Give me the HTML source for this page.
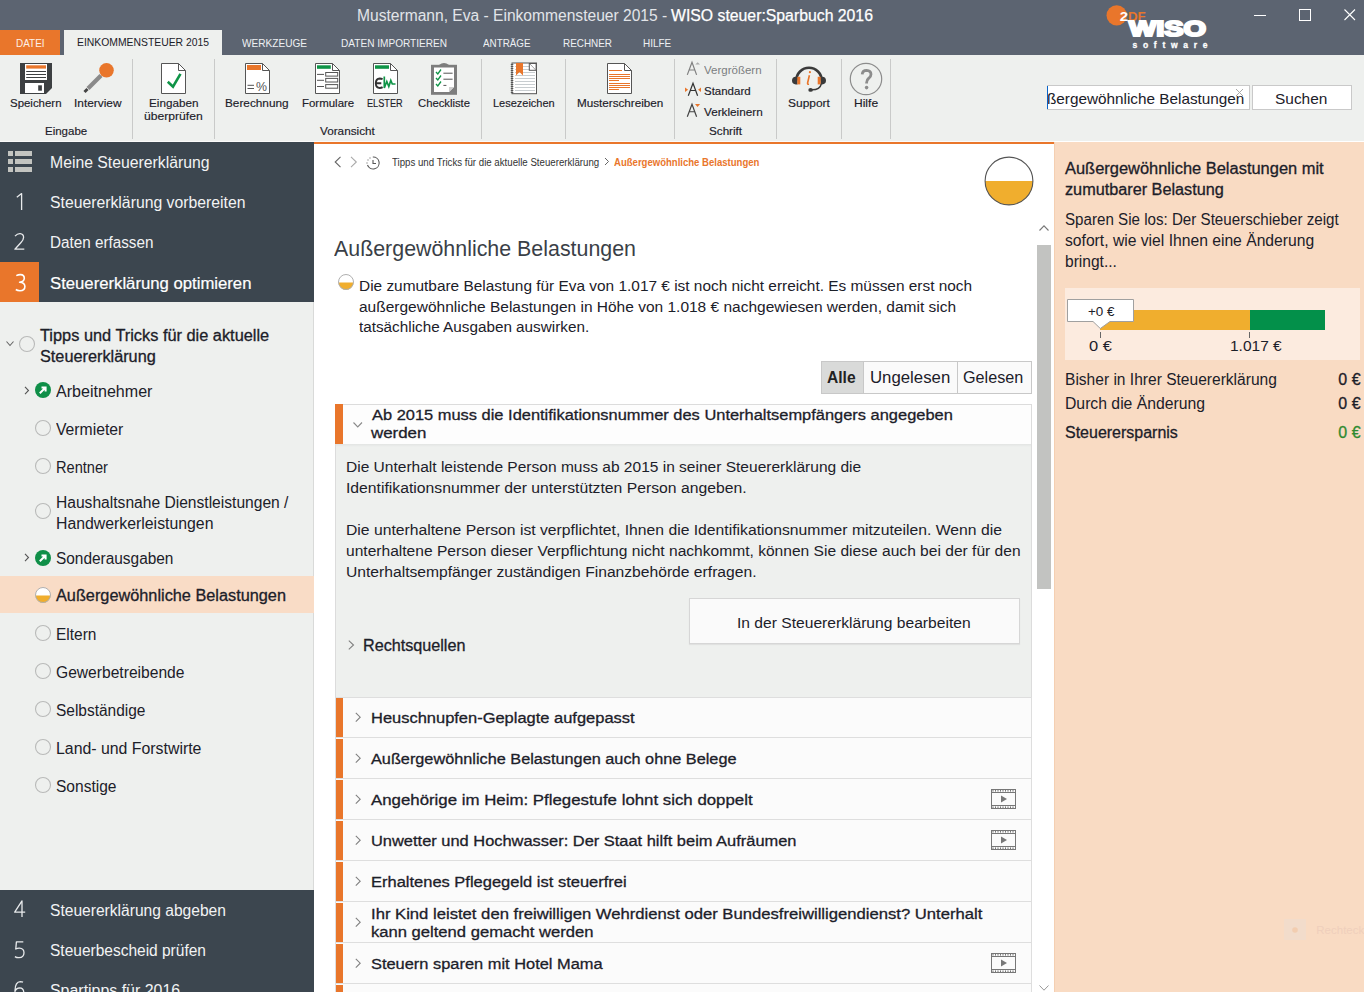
<!DOCTYPE html>
<html><head><meta charset="utf-8">
<style>
*{margin:0;padding:0;box-sizing:border-box}
html,body{width:1364px;height:992px;overflow:hidden;background:#fff;font-family:"Liberation Sans",sans-serif;color:#2a2e35;position:relative}
.a{position:absolute}
.t{white-space:nowrap;line-height:1;transform-origin:0 0}
svg{overflow:visible}
</style></head><body>
<div class="a" style="left:0px;top:0px;width:1364px;height:55px;background:#5c6471;"></div>
<div class="a t" style="left:357.06px;top:8px;font-size:16px;color:#e2e5e9;font-weight:normal;font-family:'Liberation Sans',sans-serif;transform:scaleX(0.9745);">Mustermann, Eva - Einkommensteuer 2015 -</div>
<div class="a t" style="left:670.55px;top:8px;font-size:16px;color:#ffffff;font-weight:normal;font-family:'Liberation Sans',sans-serif;transform:scaleX(0.9872);-webkit-text-stroke:0.25px #fff;">WISO steuer:Sparbuch 2016</div>
<div class="a" style="left:0px;top:30px;width:60px;height:25px;background:#e9762b;"></div>
<div class="a" style="left:64px;top:30px;width:158px;height:25px;background:#eef0ee;"></div>
<div class="a t" style="left:15.80px;top:38px;font-size:11.5px;color:#fdf0e6;font-weight:normal;font-family:'Liberation Sans',sans-serif;transform:scaleX(0.8644);">DATEI</div>
<div class="a t" style="left:76.78px;top:37px;font-size:11.5px;color:#1c2029;font-weight:normal;font-family:'Liberation Sans',sans-serif;transform:scaleX(0.9022);">EINKOMMENSTEUER 2015</div>
<div class="a t" style="left:242.39px;top:38px;font-size:11.5px;color:#eef0f3;font-weight:normal;font-family:'Liberation Sans',sans-serif;transform:scaleX(0.8775);">WERKZEUGE</div>
<div class="a t" style="left:341.40px;top:38px;font-size:11.5px;color:#eef0f3;font-weight:normal;font-family:'Liberation Sans',sans-serif;transform:scaleX(0.8765);">DATEN IMPORTIEREN</div>
<div class="a t" style="left:482.71px;top:38px;font-size:11.5px;color:#eef0f3;font-weight:normal;font-family:'Liberation Sans',sans-serif;transform:scaleX(0.8551);">ANTRÄGE</div>
<div class="a t" style="left:563.21px;top:38px;font-size:11.5px;color:#eef0f3;font-weight:normal;font-family:'Liberation Sans',sans-serif;transform:scaleX(0.8623);">RECHNER</div>
<div class="a t" style="left:642.90px;top:38px;font-size:11.5px;color:#eef0f3;font-weight:normal;font-family:'Liberation Sans',sans-serif;transform:scaleX(0.8663);">HILFE</div>
<div class="a" style="left:1254px;top:15px;width:12px;height:1px;background:#fff;"></div>
<div class="a" style="left:1299px;top:9px;width:12px;height:12px;background:transparent;border:1px solid #fff"></div>
<svg class="a" style="left:1344px;top:9px;" width="12" height="12" viewBox="0 0 12 12"><path d="M0.5 0.5L11 11M11 0.5L0.5 11" stroke="#fff" stroke-width="1.1"/></svg>
<svg class="a" style="left:1100px;top:0px;" width="120" height="55" viewBox="0 0 120 55"><circle cx="16.7" cy="15.4" r="10.2" fill="#e9762b"/><text x="19.8" y="20.8" font-family="Liberation Sans" font-weight="bold" font-size="13" fill="#fff" textLength="8.3" lengthAdjust="spacingAndGlyphs">2</text><text x="28" y="20.8" font-family="Liberation Sans" font-weight="bold" font-size="13" fill="#e9762b" textLength="17.7" lengthAdjust="spacingAndGlyphs">DF</text><text x="29" y="36" font-family="Liberation Sans" font-weight="bold" font-size="22" fill="#fff" stroke="#fff" stroke-width="2.2" textLength="77" lengthAdjust="spacingAndGlyphs">WISO</text><text x="32.5" y="48.4" font-family="Liberation Sans" font-weight="bold" font-size="8.5" fill="#fff" stroke="#fff" stroke-width="0.3" textLength="75" lengthAdjust="spacing">software</text></svg>
<div class="a" style="left:0px;top:55px;width:1364px;height:86px;background:#eef0ee;"></div>
<div class="a" style="left:0px;top:141px;width:1054px;height:1px;background:#fafafa;"></div>
<div class="a" style="left:132px;top:59px;width:1px;height:80px;background:#c9cac9;"></div>
<div class="a" style="left:214px;top:59px;width:1px;height:80px;background:#c9cac9;"></div>
<div class="a" style="left:481px;top:59px;width:1px;height:80px;background:#c9cac9;"></div>
<div class="a" style="left:565px;top:59px;width:1px;height:80px;background:#c9cac9;"></div>
<div class="a" style="left:674px;top:59px;width:1px;height:80px;background:#c9cac9;"></div>
<div class="a" style="left:776px;top:59px;width:1px;height:80px;background:#c9cac9;"></div>
<div class="a" style="left:841px;top:59px;width:1px;height:80px;background:#c9cac9;"></div>
<div class="a" style="left:890px;top:59px;width:1px;height:80px;background:#c9cac9;"></div>
<div class="a t" style="left:9.81px;top:98px;font-size:11px;color:#1c2029;font-weight:normal;font-family:'Liberation Sans',sans-serif;transform:scaleX(1.0395);-webkit-text-stroke:0.15px #1c2029;">Speichern</div>
<div class="a t" style="left:73.79px;top:98px;font-size:11px;color:#1c2029;font-weight:normal;font-family:'Liberation Sans',sans-serif;transform:scaleX(1.0789);-webkit-text-stroke:0.15px #1c2029;">Interview</div>
<div class="a t" style="left:148.50px;top:98px;font-size:11px;color:#1c2029;font-weight:normal;font-family:'Liberation Sans',sans-serif;transform:scaleX(1.0625);-webkit-text-stroke:0.15px #1c2029;">Eingaben</div>
<div class="a t" style="left:143.97px;top:111px;font-size:11px;color:#1c2029;font-weight:normal;font-family:'Liberation Sans',sans-serif;transform:scaleX(1.1031);-webkit-text-stroke:0.15px #1c2029;">überprüfen</div>
<div class="a t" style="left:44.91px;top:126px;font-size:11px;color:#1c2029;font-weight:normal;font-family:'Liberation Sans',sans-serif;transform:scaleX(1.0451);-webkit-text-stroke:0.15px #1c2029;">Eingabe</div>
<div class="a t" style="left:225.29px;top:98px;font-size:11px;color:#1c2029;font-weight:normal;font-family:'Liberation Sans',sans-serif;transform:scaleX(1.0719);-webkit-text-stroke:0.15px #1c2029;">Berechnung</div>
<div class="a t" style="left:301.61px;top:98px;font-size:11px;color:#1c2029;font-weight:normal;font-family:'Liberation Sans',sans-serif;transform:scaleX(1.0412);-webkit-text-stroke:0.15px #1c2029;">Formulare</div>
<div class="a t" style="left:366.55px;top:98px;font-size:11px;color:#1c2029;font-weight:normal;font-family:'Liberation Sans',sans-serif;transform:scaleX(0.8317);-webkit-text-stroke:0.15px #1c2029;">ELSTER</div>
<div class="a t" style="left:417.72px;top:98px;font-size:11px;color:#1c2029;font-weight:normal;font-family:'Liberation Sans',sans-serif;transform:scaleX(1.0246);-webkit-text-stroke:0.15px #1c2029;">Checkliste</div>
<div class="a t" style="left:320.30px;top:126px;font-size:11px;color:#1c2029;font-weight:normal;font-family:'Liberation Sans',sans-serif;transform:scaleX(1.0667);-webkit-text-stroke:0.15px #1c2029;">Voransicht</div>
<div class="a t" style="left:492.54px;top:98px;font-size:11px;color:#1c2029;font-weight:normal;font-family:'Liberation Sans',sans-serif;transform:scaleX(0.9987);-webkit-text-stroke:0.15px #1c2029;">Lesezeichen</div>
<div class="a t" style="left:576.60px;top:98px;font-size:11px;color:#1c2029;font-weight:normal;font-family:'Liberation Sans',sans-serif;transform:scaleX(1.0612);-webkit-text-stroke:0.15px #1c2029;">Musterschreiben</div>
<div class="a t" style="left:704.31px;top:65px;font-size:11px;color:#7b7d80;font-weight:normal;font-family:'Liberation Sans',sans-serif;transform:scaleX(1.0466);">Vergrößern</div>
<div class="a t" style="left:704.31px;top:86px;font-size:11px;color:#1c2029;font-weight:normal;font-family:'Liberation Sans',sans-serif;transform:scaleX(1.0436);-webkit-text-stroke:0.15px #1c2029;">Standard</div>
<div class="a t" style="left:704.30px;top:107px;font-size:11px;color:#1c2029;font-weight:normal;font-family:'Liberation Sans',sans-serif;transform:scaleX(1.0665);-webkit-text-stroke:0.15px #1c2029;">Verkleinern</div>
<div class="a t" style="left:708.90px;top:126px;font-size:11px;color:#1c2029;font-weight:normal;font-family:'Liberation Sans',sans-serif;transform:scaleX(1.0615);-webkit-text-stroke:0.15px #1c2029;">Schrift</div>
<div class="a t" style="left:787.78px;top:98px;font-size:11px;color:#1c2029;font-weight:normal;font-family:'Liberation Sans',sans-serif;transform:scaleX(1.0873);-webkit-text-stroke:0.15px #1c2029;">Support</div>
<div class="a t" style="left:853.58px;top:98px;font-size:11px;color:#1c2029;font-weight:normal;font-family:'Liberation Sans',sans-serif;transform:scaleX(1.0947);-webkit-text-stroke:0.15px #1c2029;">Hilfe</div>
<svg class="a" style="left:20px;top:63px;" width="32" height="31" viewBox="0 0 32 31"><path d="M0 0H32V25L26 31H0Z" fill="#3d4042"/><rect x="5" y="1" width="22" height="16" fill="#fff"/><rect x="6.2" y="2.3" width="19.8" height="3.3" fill="#e9762b"/><rect x="6.2" y="8" width="19.8" height="1" fill="#3d4042"/><rect x="6.2" y="11" width="19.8" height="1" fill="#3d4042"/><rect x="6.2" y="14" width="19.8" height="1" fill="#3d4042"/><rect x="5" y="20" width="19" height="10" fill="#fff"/><rect x="18.2" y="22.3" width="3.7" height="5.4" fill="#3d4042"/></svg>
<svg class="a" style="left:82px;top:62px;" width="34" height="33" viewBox="0 0 34 33"><line x1="2.5" y1="30" x2="5.5" y2="27" stroke="#444" stroke-width="3"/><line x1="6" y1="26.5" x2="19" y2="13.5" stroke="#8a8a8a" stroke-width="4.2"/><circle cx="24.5" cy="8.3" r="7.3" fill="#e9762b"/></svg>
<svg class="a" style="left:161px;top:63px;" width="26" height="32" viewBox="0 0 26 32"><path d="M0.5 0.5H17.5L24.5 7.5V30.5H0.5Z" fill="#fff" stroke="#555" stroke-width="1"/><path d="M17.5 0.5V7.5H24.5" fill="none" stroke="#555" stroke-width="1"/><path d="M6.8 18.7L12 23.6L19.5 10.8" fill="none" stroke="#0f9447" stroke-width="2.6"/></svg>
<svg class="a" style="left:245px;top:63px;" width="26" height="32" viewBox="0 0 26 32"><path d="M0.5 0.5H17.5L24.5 7.5V30.5H0.5Z" fill="#fff" stroke="#555" stroke-width="1"/><path d="M17.5 0.5V7.5H24.5" fill="none" stroke="#555" stroke-width="1"/><rect x="2" y="2" width="14" height="5" fill="#e9762b"/><rect x="2.5" y="21.8" width="6.5" height="1" fill="#555"/><rect x="2.5" y="25" width="6.5" height="1" fill="#555"/><text x="11" y="28" font-family="Liberation Sans" font-size="12" fill="#555" textLength="11" lengthAdjust="spacingAndGlyphs">%</text></svg>
<svg class="a" style="left:315px;top:63px;" width="26" height="32" viewBox="0 0 26 32"><path d="M0.5 0.5H17.5L24.5 7.5V30.5H0.5Z" fill="#fff" stroke="#555" stroke-width="1"/><path d="M17.5 0.5V7.5H24.5" fill="none" stroke="#555" stroke-width="1"/><rect x="2" y="2.3" width="13.8" height="3.5" fill="#0f9447"/><rect x="2" y="10.9" width="7" height="1" fill="#555"/><rect x="10.7" y="9.5" width="12" height="3.6" fill="none" stroke="#555" stroke-width="1"/><rect x="2" y="16.8" width="7" height="1" fill="#555"/><rect x="10.7" y="15.4" width="12" height="3.6" fill="none" stroke="#555" stroke-width="1"/><rect x="2" y="23" width="7" height="1" fill="#555"/><rect x="10.7" y="21.6" width="12" height="3.6" fill="none" stroke="#555" stroke-width="1"/></svg>
<svg class="a" style="left:373px;top:63px;" width="26" height="32" viewBox="0 0 26 32"><path d="M0.5 0.5H17.5L24.5 7.5V30.5H0.5Z" fill="#fff" stroke="#555" stroke-width="1"/><path d="M17.5 0.5V7.5H24.5" fill="none" stroke="#555" stroke-width="1"/><rect x="2" y="2.3" width="14" height="3.5" fill="#0f9447"/><path d="M9.6 16.3Q8.3 15.5 6.8 15.5Q2.9 15.7 2.8 20.2Q2.9 24.8 6.8 25Q8.3 25 9.6 24.1M2.8 20.2H8.3" fill="none" stroke="#333" stroke-width="1.9"/><path d="M11.3 13.5V25L13.8 18.5L15.8 23.5L17.8 17.5L19.3 21H22.5" fill="none" stroke="#0f9447" stroke-width="1.7"/></svg>
<svg class="a" style="left:431px;top:62px;" width="26" height="33" viewBox="0 0 26 33"><rect x="0" y="2.8" width="26" height="30" fill="#7d7d7d"/><path d="M8 3Q13 -1 18 3Z" fill="#7d7d7d"/><path d="M3 5.6H23V25L18 30H3Z" fill="#fff"/><path d="M23 25H18V30Z" fill="#cfcfcf"/><path d="M5 10L6.8 12L10 7.5M5 16L6.8 18L10 13.5M5 22L6.8 24L10 19.5" fill="none" stroke="#0f9447" stroke-width="1.3"/><rect x="12.4" y="10.7" width="9.2" height="1" fill="#555"/><rect x="12.4" y="16.7" width="9.2" height="1" fill="#555"/><rect x="12.4" y="22.9" width="3" height="1" fill="#555"/></svg>
<svg class="a" style="left:510px;top:62px;" width="28" height="33" viewBox="0 0 28 33"><rect x="2" y="1" width="24.5" height="30.7" fill="#fff" stroke="#555" stroke-width="1"/><rect x="5" y="4" width="20" height="1" fill="#c8cdd0"/><rect x="5" y="7" width="20" height="1" fill="#c8cdd0"/><rect x="5" y="10" width="20" height="1" fill="#c8cdd0"/><rect x="5" y="13" width="20" height="1" fill="#c8cdd0"/><rect x="5" y="16" width="20" height="1" fill="#c8cdd0"/><rect x="5" y="19" width="20" height="1" fill="#c8cdd0"/><rect x="5" y="22" width="20" height="1" fill="#c8cdd0"/><rect x="5" y="25" width="20" height="1" fill="#c8cdd0"/><rect x="5" y="28" width="20" height="1" fill="#c8cdd0"/><rect x="0.8" y="2" width="2.5" height="1" fill="#555"/><rect x="0.8" y="4" width="2.5" height="1" fill="#555"/><rect x="0.8" y="6" width="2.5" height="1" fill="#555"/><rect x="0.8" y="8" width="2.5" height="1" fill="#555"/><rect x="0.8" y="10" width="2.5" height="1" fill="#555"/><rect x="0.8" y="12" width="2.5" height="1" fill="#555"/><rect x="0.8" y="14" width="2.5" height="1" fill="#555"/><rect x="0.8" y="16" width="2.5" height="1" fill="#555"/><rect x="0.8" y="18" width="2.5" height="1" fill="#555"/><rect x="0.8" y="20" width="2.5" height="1" fill="#555"/><rect x="0.8" y="22" width="2.5" height="1" fill="#555"/><rect x="0.8" y="24" width="2.5" height="1" fill="#555"/><rect x="0.8" y="26" width="2.5" height="1" fill="#555"/><rect x="0.8" y="28" width="2.5" height="1" fill="#555"/><rect x="0.8" y="30" width="2.5" height="1" fill="#555"/><path d="M6 1H13V13.5L9.5 10L6 13.5Z" fill="#e9762b"/><rect x="19.3" y="1.5" width="6.8" height="6.8" fill="#fff" stroke="#555" stroke-width="1"/><path d="M20 2L25.5 7.8" stroke="#888" stroke-width="0.8"/></svg>
<svg class="a" style="left:607px;top:63px;" width="26" height="32" viewBox="0 0 26 32"><path d="M0.5 0.5H17.5L24.5 7.5V30.5H0.5Z" fill="#fff" stroke="#555" stroke-width="1"/><path d="M17.5 0.5V7.5H24.5" fill="none" stroke="#555" stroke-width="1"/><rect x="2" y="7" width="13" height="1" fill="#e9762b"/><rect x="2" y="11" width="21" height="1" fill="#e9762b"/><rect x="2" y="13" width="21" height="1" fill="#e9762b"/><rect x="2" y="15" width="21" height="1" fill="#e9762b"/><rect x="2" y="17" width="10" height="1" fill="#e9762b"/><rect x="2" y="20" width="21" height="1" fill="#e9762b"/><rect x="2" y="22" width="21" height="1" fill="#e9762b"/><rect x="2" y="24" width="21" height="1" fill="#e9762b"/><rect x="2" y="26" width="10" height="1" fill="#e9762b"/></svg>
<svg class="a" style="left:684px;top:60px;" width="22" height="60" viewBox="0 0 22 60"><path d="M3.3 14.9L8 2.3L12.6 14.9M5 10H11" fill="none" stroke="#808080" stroke-width="1.2"/><path d="M11.3 4.6L13.65 2.25L16 4.6Z" fill="#aaa"/><path d="M4.3 35.8L9 23.3L13.6 35.8M6 30.5H12" fill="none" stroke="#333" stroke-width="1.2"/><path d="M1 27.4L4.1 29.7L1 32Z" fill="#e9762b"/><path d="M17 27.4L14.1 29.7L17 32Z" fill="#e9762b"/><path d="M3.3 56.75L8 44.3L12.6 56.75M5 51.75H11" fill="none" stroke="#444" stroke-width="1.2"/><path d="M11 44H16.1L13.55 46.9Z" fill="#e9762b"/></svg>
<svg class="a" style="left:792px;top:62px;" width="34" height="30" viewBox="0 0 34 30"><path d="M4.3 18.5A12.7 12.7 0 0 1 29.7 18.5" fill="none" stroke="#3a3a3a" stroke-width="2.6"/><path d="M5.5 14.8H3.8A3.8 3.8 0 0 0 3.8 22.4H5.5Z" fill="#3a3a3a"/><path d="M28.5 14.8H30.2A3.8 3.8 0 0 1 30.2 22.4H28.5Z" fill="#3a3a3a"/><rect x="5.3" y="14.8" width="3" height="7.6" fill="#e9762b"/><rect x="25.7" y="14.8" width="3" height="7.6" fill="#e9762b"/><path d="M29.3 22Q28 27.8 20 27.8" fill="none" stroke="#3a3a3a" stroke-width="1.4"/><ellipse cx="18.6" cy="27.9" rx="2.3" ry="1.9" fill="#3a3a3a"/><path d="M17.4 13.2L15.6 21Q15.3 22.6 17 22.2" fill="none" stroke="#e9762b" stroke-width="1.6"/><circle cx="17.9" cy="10.2" r="1.1" fill="#e9762b"/></svg>
<svg class="a" style="left:849px;top:62px;" width="34" height="34" viewBox="0 0 34 34"><circle cx="17" cy="17" r="15.7" fill="none" stroke="#8c8c8c" stroke-width="1.2"/><path d="M13.2 12.3Q13.5 8.3 17.6 8.3Q21.9 8.4 22 12.2Q22 14.8 19.5 16.5Q17.6 17.8 17.6 20.8V21.5" fill="none" stroke="#8c8c8c" stroke-width="2.8"/><circle cx="17.6" cy="25.6" r="1.8" fill="#8c8c8c"/></svg>
<div class="a" style="left:1047px;top:85px;width:203px;height:25px;background:#fff;border:1px solid #c9c9c9"></div>
<div class="a" style="left:1048px;top:86px;width:201px;height:23px;overflow:hidden">
<div class="a t" style="left:-0.92px;top:5px;font-size:15px;color:#1c2029;font-weight:normal;font-family:'Liberation Sans',sans-serif;transform:scaleX(1.0201);">ßergewöhnliche Belastungen</div>
</div>
<div class="a" style="left:1047px;top:86px;width:1px;height:23px;background:#0a64c8;"></div>
<svg class="a" style="left:1235px;top:88px;" width="10" height="10" viewBox="0 0 10 10"><path d="M1 1L8 8M8 1L1 8" stroke="#aaa" stroke-width="1"/></svg>
<div class="a" style="left:1252px;top:85px;width:100px;height:25px;background:#fff;border:1px solid #c9c9c9"></div>
<div class="a t" style="left:1275.07px;top:91px;font-size:15px;color:#1c2029;font-weight:normal;font-family:'Liberation Sans',sans-serif;transform:scaleX(1.0290);">Suchen</div>
<div class="a" style="left:0px;top:142px;width:314px;height:850px;background:#eef0ee;"></div>
<div class="a" style="left:313px;top:302px;width:1px;height:588px;background:#d9dad9;"></div>
<div class="a" style="left:0px;top:142px;width:314px;height:160px;background:#3c464f;"></div>
<div class="a" style="left:0px;top:890px;width:314px;height:102px;background:#3c464f;"></div>
<div class="a" style="left:0px;top:262px;width:39px;height:40px;background:#e9762b;"></div>
<div class="a" style="left:8px;top:151px;width:5px;height:5px;background:#c3c4c0;"></div>
<div class="a" style="left:15px;top:151px;width:17px;height:5px;background:#c3c4c0;"></div>
<div class="a" style="left:8px;top:159px;width:5px;height:5px;background:#c3c4c0;"></div>
<div class="a" style="left:15px;top:159px;width:17px;height:5px;background:#c3c4c0;"></div>
<div class="a" style="left:8px;top:167px;width:5px;height:5px;background:#c3c4c0;"></div>
<div class="a" style="left:15px;top:167px;width:17px;height:5px;background:#c3c4c0;"></div>
<div class="a t" style="left:49.55px;top:155px;font-size:16px;color:#f2f3f4;font-weight:normal;font-family:'Liberation Sans',sans-serif;transform:scaleX(0.9850);">Meine Steuererklärung</div>
<div class="a t" style="left:49.55px;top:195px;font-size:16px;color:#f2f3f4;font-weight:normal;font-family:'Liberation Sans',sans-serif;transform:scaleX(0.9854);">Steuererklärung vorbereiten</div>
<div class="a t" style="left:49.58px;top:235px;font-size:16px;color:#f2f3f4;font-weight:normal;font-family:'Liberation Sans',sans-serif;transform:scaleX(0.9533);">Daten erfassen</div>
<div class="a t" style="left:49.50px;top:276px;font-size:16px;color:#ffffff;font-weight:normal;font-family:'Liberation Sans',sans-serif;transform:scaleX(1.0438);-webkit-text-stroke:0.2px #fff;">Steuererklärung optimieren</div>
<svg class="a" style="left:16px;top:192.6px;" width="12" height="18" viewBox="0 0 12 18"><path d="M0.8 4.2L5.6 0.6V17" fill="none" stroke="#e8eaec" stroke-width="1.3" stroke-linejoin="round"/></svg>
<svg class="a" style="left:14.3px;top:233.3px;" width="12" height="18" viewBox="0 0 12 18"><path d="M1 3.2Q3.5 0.3 6.2 0.6Q9.5 1 9.6 4.3Q9.6 6.8 7 9.5L0.9 16.2H10.3" fill="none" stroke="#e8eaec" stroke-width="1.3" stroke-linejoin="round"/></svg>
<svg class="a" style="left:14.6px;top:273.5px;" width="12" height="18" viewBox="0 0 12 18"><path d="M1.3 1.6Q3.5 0.5 5.5 0.6Q9.3 0.8 9.3 4.3Q9.2 7.8 4.6 8.2Q9.8 8.4 9.9 12.4Q9.8 16.6 5 16.7Q2.5 16.7 0.8 15.5" fill="none" stroke="#fff" stroke-width="1.6" stroke-linejoin="round"/></svg>
<svg class="a" style="left:13.6px;top:899.8px;" width="12" height="18" viewBox="0 0 12 18"><path d="M8 17V0.8L0.7 12.2H11.2" fill="none" stroke="#e8eaec" stroke-width="1.3" stroke-linejoin="round"/></svg>
<svg class="a" style="left:14.2px;top:941.3px;" width="12" height="18" viewBox="0 0 12 18"><path d="M9.3 0.9H2.4L1.8 8Q3.5 7 5.4 7.1Q9.9 7.3 10 11.8Q9.9 16.6 5 16.7Q2.5 16.7 0.9 15.6" fill="none" stroke="#e8eaec" stroke-width="1.3" stroke-linejoin="round"/></svg>
<svg class="a" style="left:14.3px;top:981.3px;" width="12" height="18" viewBox="0 0 12 18"><path d="M9 1.2Q7.8 0.6 6.3 0.6Q1.2 0.8 1 9.5Q1 16.7 5.4 16.7Q9.7 16.6 9.8 11.6Q9.7 7 5.6 6.9Q2.6 6.9 1.2 9.8" fill="none" stroke="#e8eaec" stroke-width="1.3" stroke-linejoin="round"/></svg>
<div class="a t" style="left:49.56px;top:903px;font-size:16px;color:#f2f3f4;font-weight:normal;font-family:'Liberation Sans',sans-serif;transform:scaleX(0.9743);">Steuererklärung abgeben</div>
<div class="a t" style="left:49.57px;top:943px;font-size:16px;color:#f2f3f4;font-weight:normal;font-family:'Liberation Sans',sans-serif;transform:scaleX(0.9686);">Steuerbescheid prüfen</div>
<div class="a t" style="left:49.54px;top:983px;font-size:16px;color:#f2f3f4;font-weight:normal;font-family:'Liberation Sans',sans-serif;transform:scaleX(0.9953);">Spartipps für 2016</div>
<svg class="a" style="left:6px;top:341px;" width="8" height="5" viewBox="0 0 8 5"><path d="M0.5 0.5L4.0 4.5L7.5 0.5" fill="none" stroke="#666" stroke-width="1.1"/></svg>
<svg class="a" style="left:17.8px;top:334.6px;" width="18" height="18" viewBox="0 0 18 18"><circle cx="9" cy="9" r="7.5" fill="none" stroke="#b9bab9" stroke-width="1.1"/></svg>
<div class="a t" style="left:39.72px;top:328px;font-size:16px;color:#1c2029;font-weight:normal;font-family:'Liberation Sans',sans-serif;transform:scaleX(1.0212);-webkit-text-stroke:0.3px #1c2029;">Tipps und Tricks für die aktuelle</div>
<div class="a t" style="left:39.72px;top:349px;font-size:16px;color:#1c2029;font-weight:normal;font-family:'Liberation Sans',sans-serif;transform:scaleX(1.0167);-webkit-text-stroke:0.3px #1c2029;">Steuererklärung</div>
<svg class="a" style="left:23.5px;top:386px;" width="6" height="9" viewBox="0 0 6 9"><path d="M1 0.8L4.5 4.5L1 8.2" fill="none" stroke="#555" stroke-width="1.1"/></svg>
<svg class="a" style="left:33.9px;top:380.8px;" width="18" height="18" viewBox="0 0 18 18"><circle cx="9" cy="9" r="8" fill="#0f8f48"/><path d="M5.8 12.2L11 7M7.5 6.5H11.6V10.6" fill="none" stroke="#fff" stroke-width="2"/></svg>
<div class="a t" style="left:55.74px;top:384px;font-size:16px;color:#1c2029;font-weight:normal;font-family:'Liberation Sans',sans-serif;transform:scaleX(1.0041);">Arbeitnehmer</div>
<svg class="a" style="left:33.9px;top:418.6px;" width="18" height="18" viewBox="0 0 18 18"><circle cx="9" cy="9" r="7.5" fill="none" stroke="#b9bab9" stroke-width="1.1"/></svg>
<div class="a t" style="left:55.76px;top:422px;font-size:16px;color:#1c2029;font-weight:normal;font-family:'Liberation Sans',sans-serif;transform:scaleX(0.9821);">Vermieter</div>
<svg class="a" style="left:33.9px;top:456.6px;" width="18" height="18" viewBox="0 0 18 18"><circle cx="9" cy="9" r="7.5" fill="none" stroke="#b9bab9" stroke-width="1.1"/></svg>
<div class="a t" style="left:55.82px;top:460px;font-size:16px;color:#1c2029;font-weight:normal;font-family:'Liberation Sans',sans-serif;transform:scaleX(0.9125);">Rentner</div>
<svg class="a" style="left:33.9px;top:501.6px;" width="18" height="18" viewBox="0 0 18 18"><circle cx="9" cy="9" r="7.5" fill="none" stroke="#b9bab9" stroke-width="1.1"/></svg>
<div class="a t" style="left:55.76px;top:495px;font-size:16px;color:#1c2029;font-weight:normal;font-family:'Liberation Sans',sans-serif;transform:scaleX(0.9751);">Haushaltsnahe Dienstleistungen /</div>
<div class="a t" style="left:55.75px;top:516px;font-size:16px;color:#1c2029;font-weight:normal;font-family:'Liberation Sans',sans-serif;transform:scaleX(0.9889);">Handwerkerleistungen</div>
<svg class="a" style="left:23.5px;top:553px;" width="6" height="9" viewBox="0 0 6 9"><path d="M1 0.8L4.5 4.5L1 8.2" fill="none" stroke="#555" stroke-width="1.1"/></svg>
<svg class="a" style="left:33.9px;top:548.5px;" width="18" height="18" viewBox="0 0 18 18"><circle cx="9" cy="9" r="8" fill="#0f8f48"/><path d="M5.8 12.2L11 7M7.5 6.5H11.6V10.6" fill="none" stroke="#fff" stroke-width="2"/></svg>
<div class="a t" style="left:55.77px;top:551px;font-size:16px;color:#1c2029;font-weight:normal;font-family:'Liberation Sans',sans-serif;transform:scaleX(0.9635);">Sonderausgaben</div>
<div class="a" style="left:0px;top:576px;width:314px;height:37px;background:#f9dcc6;"></div>
<svg class="a" style="left:33.9px;top:586px;" width="18" height="18" viewBox="0 0 18 18"><circle cx="9" cy="9" r="7.5" fill="#fff"/><path d="M1.5 9.5A7.5 7.5 0 0 0 16.5 9.5Z" fill="#f0ae2e"/><circle cx="9" cy="9" r="7.5" fill="none" stroke="#b0b0b0" stroke-width="1"/></svg>
<div class="a t" style="left:55.72px;top:588px;font-size:16px;color:#1c2029;font-weight:normal;font-family:'Liberation Sans',sans-serif;transform:scaleX(1.0178);-webkit-text-stroke:0.3px #1c2029;">Außergewöhnliche Belastungen</div>
<svg class="a" style="left:33.9px;top:623.8px;" width="18" height="18" viewBox="0 0 18 18"><circle cx="9" cy="9" r="7.5" fill="none" stroke="#b9bab9" stroke-width="1.1"/></svg>
<div class="a t" style="left:55.77px;top:627px;font-size:16px;color:#1c2029;font-weight:normal;font-family:'Liberation Sans',sans-serif;transform:scaleX(0.9675);">Eltern</div>
<svg class="a" style="left:33.9px;top:661.5px;" width="18" height="18" viewBox="0 0 18 18"><circle cx="9" cy="9" r="7.5" fill="none" stroke="#b9bab9" stroke-width="1.1"/></svg>
<div class="a t" style="left:55.76px;top:665px;font-size:16px;color:#1c2029;font-weight:normal;font-family:'Liberation Sans',sans-serif;transform:scaleX(0.9757);">Gewerbetreibende</div>
<svg class="a" style="left:33.9px;top:699.5px;" width="18" height="18" viewBox="0 0 18 18"><circle cx="9" cy="9" r="7.5" fill="none" stroke="#b9bab9" stroke-width="1.1"/></svg>
<div class="a t" style="left:55.77px;top:703px;font-size:16px;color:#1c2029;font-weight:normal;font-family:'Liberation Sans',sans-serif;transform:scaleX(0.9668);">Selbständige</div>
<svg class="a" style="left:33.9px;top:737.5px;" width="18" height="18" viewBox="0 0 18 18"><circle cx="9" cy="9" r="7.5" fill="none" stroke="#b9bab9" stroke-width="1.1"/></svg>
<div class="a t" style="left:55.75px;top:741px;font-size:16px;color:#1c2029;font-weight:normal;font-family:'Liberation Sans',sans-serif;transform:scaleX(0.9912);">Land- und Forstwirte</div>
<svg class="a" style="left:33.9px;top:775.5px;" width="18" height="18" viewBox="0 0 18 18"><circle cx="9" cy="9" r="7.5" fill="none" stroke="#b9bab9" stroke-width="1.1"/></svg>
<div class="a t" style="left:55.77px;top:779px;font-size:16px;color:#1c2029;font-weight:normal;font-family:'Liberation Sans',sans-serif;transform:scaleX(0.9707);">Sonstige</div>
<div class="a" style="left:314px;top:142px;width:740px;height:2px;background:#e9762b;"></div>
<svg class="a" style="left:334px;top:156px;" width="8" height="12" viewBox="0 0 8 12"><path d="M6.5 0.8L1.2 6L6.5 11.2" fill="none" stroke="#666" stroke-width="1.1"/></svg>
<svg class="a" style="left:350px;top:156px;" width="8" height="12" viewBox="0 0 8 12"><path d="M1 0.8L6.3 6L1 11.2" fill="none" stroke="#aaa" stroke-width="1.1"/></svg>
<svg class="a" style="left:366px;top:156px;" width="15" height="14" viewBox="0 0 15 14"><path d="M6.8 1A6 6 0 1 1 1.5 9" fill="none" stroke="#555" stroke-width="1.1"/><path d="M1 6.5V7.5M2 3.5V4.5M4 1.5V2.5" stroke="#555" stroke-width="1"/><path d="M7 4V7.5H10" fill="none" stroke="#555" stroke-width="1.1"/></svg>
<div class="a t" style="left:391.82px;top:158px;font-size:10px;color:#333;font-weight:normal;font-family:'Liberation Sans',sans-serif;transform:scaleX(0.9675);">Tipps und Tricks für die aktuelle Steuererklärung</div>
<svg class="a" style="left:604px;top:157px;" width="6" height="9" viewBox="0 0 6 9"><path d="M1 1L4.5 4.5L1 8" fill="none" stroke="#666" stroke-width="1"/></svg>
<div class="a t" style="left:613.73px;top:158px;font-size:10px;color:#e9762b;font-weight:bold;font-family:'Liberation Sans',sans-serif;transform:scaleX(0.9551);">Außergewöhnliche Belastungen</div>
<svg class="a" style="left:984px;top:156px;" width="50" height="50" viewBox="0 0 50 50"><path d="M1 25A24 24 0 0 0 49 25Z" fill="#f0ae2e"/><circle cx="25" cy="25" r="23.9" fill="none" stroke="#555" stroke-width="1.1"/></svg>
<svg class="a" style="left:1039px;top:225px" width="10" height="6"><path d="M0.5 5.5L5 0.8L9.5 5.5" fill="none" stroke="#777" stroke-width="1.1"/></svg>
<div class="a" style="left:1037px;top:245px;width:14px;height:344px;background:#c2c3c1;"></div>
<div class="a t" style="left:333.72px;top:238px;font-size:22px;color:#3a3f47;font-weight:normal;font-family:'Liberation Sans',sans-serif;transform:scaleX(0.9721);">Außergewöhnliche Belastungen</div>
<svg class="a" style="left:336.8px;top:272.8px;" width="18" height="18" viewBox="0 0 18 18"><circle cx="9" cy="9" r="7.5" fill="#fff"/><path d="M1.5 9.5A7.5 7.5 0 0 0 16.5 9.5Z" fill="#f0ae2e"/><circle cx="9" cy="9" r="7.5" fill="none" stroke="#b0b0b0" stroke-width="1"/></svg>
<div class="a t" style="left:358.78px;top:278px;font-size:15.5px;color:#1c2029;font-weight:normal;font-family:'Liberation Sans',sans-serif;transform:scaleX(0.9939);">Die zumutbare Belastung für Eva von 1.017 € ist noch nicht erreicht. Es müssen erst noch</div>
<div class="a t" style="left:358.77px;top:299px;font-size:15.5px;color:#1c2029;font-weight:normal;font-family:'Liberation Sans',sans-serif;transform:scaleX(0.9999);">außergewöhnliche Belastungen in Höhe von 1.018 € nachgewiesen werden, damit sich</div>
<div class="a t" style="left:358.78px;top:319px;font-size:15.5px;color:#1c2029;font-weight:normal;font-family:'Liberation Sans',sans-serif;transform:scaleX(0.9856);">tatsächliche Ausgaben auswirken.</div>
<div class="a" style="left:821px;top:361px;width:211px;height:33px;background:#fafafa;border:1px solid #c8c8c8"></div>
<div class="a" style="left:822px;top:362px;width:42px;height:31px;background:#d9dad9;"></div>
<div class="a" style="left:863px;top:362px;width:1px;height:31px;background:#c8c8c8;"></div>
<div class="a" style="left:957px;top:362px;width:1px;height:31px;background:#c8c8c8;"></div>
<div class="a t" style="left:827.47px;top:370px;font-size:16px;color:#222;font-weight:bold;font-family:'Liberation Sans',sans-serif;transform:scaleX(0.9726);">Alle</div>
<div class="a t" style="left:869.59px;top:370px;font-size:16px;color:#1c2029;font-weight:normal;font-family:'Liberation Sans',sans-serif;transform:scaleX(1.0489);">Ungelesen</div>
<div class="a t" style="left:963.43px;top:370px;font-size:16px;color:#1c2029;font-weight:normal;font-family:'Liberation Sans',sans-serif;transform:scaleX(1.0108);">Gelesen</div>
<div class="a" style="left:335px;top:404px;width:697px;height:294px;background:#eef0ee;border:1px solid #dcdcdc"></div>
<div class="a" style="left:336px;top:405px;width:695px;height:39px;background:#fdfdfd;"></div>
<div class="a" style="left:336px;top:444px;width:695px;height:3px;background:linear-gradient(#e2e4e3,#eef0ee);"></div>
<div class="a" style="left:335px;top:404px;width:8px;height:40px;background:#e9762b;"></div>
<svg class="a" style="left:353.3px;top:421.6px;" width="9.5" height="5.5" viewBox="0 0 9.5 5.5"><path d="M0.5 0.5L4.75 5.0L9.0 0.5" fill="none" stroke="#8a8a8a" stroke-width="1.1"/></svg>
<div class="a t" style="left:371.51px;top:407px;font-size:15.5px;color:#1c2029;font-weight:normal;font-family:'Liberation Sans',sans-serif;transform:scaleX(1.0599);-webkit-text-stroke:0.3px #1c2029;">Ab 2015 muss die Identifikationsnummer des Unterhaltsempfängers angegeben</div>
<div class="a t" style="left:371.49px;top:425px;font-size:15.5px;color:#1c2029;font-weight:normal;font-family:'Liberation Sans',sans-serif;transform:scaleX(1.0897);-webkit-text-stroke:0.3px #1c2029;">werden</div>
<div class="a t" style="left:345.57px;top:459px;font-size:15.5px;color:#1c2029;font-weight:normal;font-family:'Liberation Sans',sans-serif;transform:scaleX(1.0016);">Die Unterhalt leistende Person muss ab 2015 in seiner Steuererklärung die</div>
<div class="a t" style="left:345.56px;top:480px;font-size:15.5px;color:#1c2029;font-weight:normal;font-family:'Liberation Sans',sans-serif;transform:scaleX(1.0149);">Identifikationsnummer der unterstützten Person angeben.</div>
<div class="a t" style="left:345.56px;top:522px;font-size:15.5px;color:#1c2029;font-weight:normal;font-family:'Liberation Sans',sans-serif;transform:scaleX(1.0141);">Die unterhaltene Person ist verpflichtet, Ihnen die Identifikationsnummer mitzuteilen. Wenn die</div>
<div class="a t" style="left:345.57px;top:543px;font-size:15.5px;color:#1c2029;font-weight:normal;font-family:'Liberation Sans',sans-serif;transform:scaleX(1.0050);">unterhaltene Person dieser Verpflichtung nicht nachkommt, können Sie diese auch bei der für den</div>
<div class="a t" style="left:345.56px;top:564px;font-size:15.5px;color:#1c2029;font-weight:normal;font-family:'Liberation Sans',sans-serif;transform:scaleX(1.0093);">Unterhaltsempfänger zuständigen Finanzbehörde erfragen.</div>
<div class="a" style="left:689px;top:598px;width:331px;height:46px;background:#fafafa;border:1px solid #d6d6d6;box-shadow:0 1px 1px rgba(0,0,0,0.06)"></div>
<div class="a t" style="left:737.46px;top:615px;font-size:15.5px;color:#1c2029;font-weight:normal;font-family:'Liberation Sans',sans-serif;transform:scaleX(1.0078);">In der Steuererklärung bearbeiten</div>
<svg class="a" style="left:348px;top:640px;" width="7" height="11" viewBox="0 0 7 11"><path d="M0.8 0.6L5.5 5L0.8 9.4" fill="none" stroke="#808080" stroke-width="1.1"/></svg>
<div class="a t" style="left:362.83px;top:638px;font-size:16px;color:#1c2029;font-weight:normal;font-family:'Liberation Sans',sans-serif;transform:scaleX(1.0103);-webkit-text-stroke:0.3px #1c2029;">Rechtsquellen</div>
<div class="a" style="left:335px;top:697px;width:697px;height:41px;background:#fbfbfb;border:1px solid #dedede"></div>
<div class="a" style="left:336px;top:698px;width:7px;height:39px;background:#e9762b;"></div>
<svg class="a" style="left:355px;top:712px;" width="7" height="11" viewBox="0 0 7 11"><path d="M0.8 0.8L5.2 5.2L0.8 9.6" fill="none" stroke="#808080" stroke-width="1.1"/></svg>
<div class="a t" style="left:371.41px;top:710px;font-size:15.5px;color:#1c2029;font-weight:normal;font-family:'Liberation Sans',sans-serif;transform:scaleX(1.0621);-webkit-text-stroke:0.3px #1c2029;">Heuschnupfen-Geplagte aufgepasst</div>
<div class="a" style="left:335px;top:737px;width:697px;height:42px;background:#fbfbfb;border:1px solid #dedede"></div>
<div class="a" style="left:336px;top:739px;width:7px;height:39px;background:#e9762b;"></div>
<svg class="a" style="left:355px;top:753px;" width="7" height="11" viewBox="0 0 7 11"><path d="M0.8 0.8L5.2 5.2L0.8 9.6" fill="none" stroke="#808080" stroke-width="1.1"/></svg>
<div class="a t" style="left:371.42px;top:751px;font-size:15.5px;color:#1c2029;font-weight:normal;font-family:'Liberation Sans',sans-serif;transform:scaleX(1.0498);-webkit-text-stroke:0.3px #1c2029;">Außergewöhnliche Belastungen auch ohne Belege</div>
<div class="a" style="left:335px;top:778px;width:697px;height:42px;background:#fbfbfb;border:1px solid #dedede"></div>
<div class="a" style="left:336px;top:780px;width:7px;height:39px;background:#e9762b;"></div>
<svg class="a" style="left:355px;top:794px;" width="7" height="11" viewBox="0 0 7 11"><path d="M0.8 0.8L5.2 5.2L0.8 9.6" fill="none" stroke="#808080" stroke-width="1.1"/></svg>
<div class="a t" style="left:371.39px;top:792px;font-size:15.5px;color:#1c2029;font-weight:normal;font-family:'Liberation Sans',sans-serif;transform:scaleX(1.0855);-webkit-text-stroke:0.3px #1c2029;">Angehörige im Heim: Pflegestufe lohnt sich doppelt</div>
<svg class="a" style="left:991px;top:789px;" width="26" height="21" viewBox="0 0 26 21"><rect x="0.5" y="0.5" width="24" height="19" fill="none" stroke="#777" stroke-width="1"/><rect x="0.5" y="3" width="24" height="1" fill="#777"/><rect x="0.5" y="16" width="24" height="1" fill="#777"/><rect x="1.5" y="1" width="1" height="1.6" fill="#777"/><rect x="1.5" y="17.4" width="1" height="1.6" fill="#777"/><rect x="4.0" y="1" width="1" height="1.6" fill="#777"/><rect x="4.0" y="17.4" width="1" height="1.6" fill="#777"/><rect x="6.5" y="1" width="1" height="1.6" fill="#777"/><rect x="6.5" y="17.4" width="1" height="1.6" fill="#777"/><rect x="9.0" y="1" width="1" height="1.6" fill="#777"/><rect x="9.0" y="17.4" width="1" height="1.6" fill="#777"/><rect x="11.5" y="1" width="1" height="1.6" fill="#777"/><rect x="11.5" y="17.4" width="1" height="1.6" fill="#777"/><rect x="14.0" y="1" width="1" height="1.6" fill="#777"/><rect x="14.0" y="17.4" width="1" height="1.6" fill="#777"/><rect x="16.5" y="1" width="1" height="1.6" fill="#777"/><rect x="16.5" y="17.4" width="1" height="1.6" fill="#777"/><rect x="19.0" y="1" width="1" height="1.6" fill="#777"/><rect x="19.0" y="17.4" width="1" height="1.6" fill="#777"/><rect x="21.5" y="1" width="1" height="1.6" fill="#777"/><rect x="21.5" y="17.4" width="1" height="1.6" fill="#777"/><rect x="24.0" y="1" width="1" height="1.6" fill="#777"/><rect x="24.0" y="17.4" width="1" height="1.6" fill="#777"/><path d="M10 6.5L16 10L10 13.5Z" fill="#777"/></svg>
<div class="a" style="left:335px;top:819px;width:697px;height:42px;background:#fbfbfb;border:1px solid #dedede"></div>
<div class="a" style="left:336px;top:821px;width:7px;height:39px;background:#e9762b;"></div>
<svg class="a" style="left:355px;top:835px;" width="7" height="11" viewBox="0 0 7 11"><path d="M0.8 0.8L5.2 5.2L0.8 9.6" fill="none" stroke="#808080" stroke-width="1.1"/></svg>
<div class="a t" style="left:371.41px;top:833px;font-size:15.5px;color:#1c2029;font-weight:normal;font-family:'Liberation Sans',sans-serif;transform:scaleX(1.0598);-webkit-text-stroke:0.3px #1c2029;">Unwetter und Hochwasser: Der Staat hilft beim Aufräumen</div>
<svg class="a" style="left:991px;top:830px;" width="26" height="21" viewBox="0 0 26 21"><rect x="0.5" y="0.5" width="24" height="19" fill="none" stroke="#777" stroke-width="1"/><rect x="0.5" y="3" width="24" height="1" fill="#777"/><rect x="0.5" y="16" width="24" height="1" fill="#777"/><rect x="1.5" y="1" width="1" height="1.6" fill="#777"/><rect x="1.5" y="17.4" width="1" height="1.6" fill="#777"/><rect x="4.0" y="1" width="1" height="1.6" fill="#777"/><rect x="4.0" y="17.4" width="1" height="1.6" fill="#777"/><rect x="6.5" y="1" width="1" height="1.6" fill="#777"/><rect x="6.5" y="17.4" width="1" height="1.6" fill="#777"/><rect x="9.0" y="1" width="1" height="1.6" fill="#777"/><rect x="9.0" y="17.4" width="1" height="1.6" fill="#777"/><rect x="11.5" y="1" width="1" height="1.6" fill="#777"/><rect x="11.5" y="17.4" width="1" height="1.6" fill="#777"/><rect x="14.0" y="1" width="1" height="1.6" fill="#777"/><rect x="14.0" y="17.4" width="1" height="1.6" fill="#777"/><rect x="16.5" y="1" width="1" height="1.6" fill="#777"/><rect x="16.5" y="17.4" width="1" height="1.6" fill="#777"/><rect x="19.0" y="1" width="1" height="1.6" fill="#777"/><rect x="19.0" y="17.4" width="1" height="1.6" fill="#777"/><rect x="21.5" y="1" width="1" height="1.6" fill="#777"/><rect x="21.5" y="17.4" width="1" height="1.6" fill="#777"/><rect x="24.0" y="1" width="1" height="1.6" fill="#777"/><rect x="24.0" y="17.4" width="1" height="1.6" fill="#777"/><path d="M10 6.5L16 10L10 13.5Z" fill="#777"/></svg>
<div class="a" style="left:335px;top:860px;width:697px;height:42px;background:#fbfbfb;border:1px solid #dedede"></div>
<div class="a" style="left:336px;top:862px;width:7px;height:39px;background:#e9762b;"></div>
<svg class="a" style="left:355px;top:876px;" width="7" height="11" viewBox="0 0 7 11"><path d="M0.8 0.8L5.2 5.2L0.8 9.6" fill="none" stroke="#808080" stroke-width="1.1"/></svg>
<div class="a t" style="left:371.41px;top:874px;font-size:15.5px;color:#1c2029;font-weight:normal;font-family:'Liberation Sans',sans-serif;transform:scaleX(1.0633);-webkit-text-stroke:0.3px #1c2029;">Erhaltenes Pflegegeld ist steuerfrei</div>
<div class="a" style="left:335px;top:901px;width:697px;height:42px;background:#fbfbfb;border:1px solid #dedede"></div>
<div class="a" style="left:336px;top:903px;width:7px;height:39px;background:#e9762b;"></div>
<svg class="a" style="left:355px;top:917px;" width="7" height="11" viewBox="0 0 7 11"><path d="M0.8 0.8L5.2 5.2L0.8 9.6" fill="none" stroke="#808080" stroke-width="1.1"/></svg>
<div class="a t" style="left:371.40px;top:906px;font-size:15.5px;color:#1c2029;font-weight:normal;font-family:'Liberation Sans',sans-serif;transform:scaleX(1.0741);-webkit-text-stroke:0.3px #1c2029;">Ihr Kind leistet den freiwilligen Wehrdienst oder Bundesfreiwilligendienst? Unterhalt</div>
<div class="a t" style="left:371.40px;top:924px;font-size:15.5px;color:#1c2029;font-weight:normal;font-family:'Liberation Sans',sans-serif;transform:scaleX(1.0709);-webkit-text-stroke:0.3px #1c2029;">kann geltend gemacht werden</div>
<div class="a" style="left:335px;top:942px;width:697px;height:42px;background:#fbfbfb;border:1px solid #dedede"></div>
<div class="a" style="left:336px;top:944px;width:7px;height:39px;background:#e9762b;"></div>
<svg class="a" style="left:355px;top:958px;" width="7" height="11" viewBox="0 0 7 11"><path d="M0.8 0.8L5.2 5.2L0.8 9.6" fill="none" stroke="#808080" stroke-width="1.1"/></svg>
<div class="a t" style="left:371.42px;top:956px;font-size:15.5px;color:#1c2029;font-weight:normal;font-family:'Liberation Sans',sans-serif;transform:scaleX(1.0584);-webkit-text-stroke:0.3px #1c2029;">Steuern sparen mit Hotel Mama</div>
<svg class="a" style="left:991px;top:953px;" width="26" height="21" viewBox="0 0 26 21"><rect x="0.5" y="0.5" width="24" height="19" fill="none" stroke="#777" stroke-width="1"/><rect x="0.5" y="3" width="24" height="1" fill="#777"/><rect x="0.5" y="16" width="24" height="1" fill="#777"/><rect x="1.5" y="1" width="1" height="1.6" fill="#777"/><rect x="1.5" y="17.4" width="1" height="1.6" fill="#777"/><rect x="4.0" y="1" width="1" height="1.6" fill="#777"/><rect x="4.0" y="17.4" width="1" height="1.6" fill="#777"/><rect x="6.5" y="1" width="1" height="1.6" fill="#777"/><rect x="6.5" y="17.4" width="1" height="1.6" fill="#777"/><rect x="9.0" y="1" width="1" height="1.6" fill="#777"/><rect x="9.0" y="17.4" width="1" height="1.6" fill="#777"/><rect x="11.5" y="1" width="1" height="1.6" fill="#777"/><rect x="11.5" y="17.4" width="1" height="1.6" fill="#777"/><rect x="14.0" y="1" width="1" height="1.6" fill="#777"/><rect x="14.0" y="17.4" width="1" height="1.6" fill="#777"/><rect x="16.5" y="1" width="1" height="1.6" fill="#777"/><rect x="16.5" y="17.4" width="1" height="1.6" fill="#777"/><rect x="19.0" y="1" width="1" height="1.6" fill="#777"/><rect x="19.0" y="17.4" width="1" height="1.6" fill="#777"/><rect x="21.5" y="1" width="1" height="1.6" fill="#777"/><rect x="21.5" y="17.4" width="1" height="1.6" fill="#777"/><rect x="24.0" y="1" width="1" height="1.6" fill="#777"/><rect x="24.0" y="17.4" width="1" height="1.6" fill="#777"/><path d="M10 6.5L16 10L10 13.5Z" fill="#777"/></svg>
<div class="a" style="left:335px;top:983px;width:697px;height:42px;background:#fbfbfb;border:1px solid #dedede"></div>
<div class="a" style="left:336px;top:985px;width:7px;height:39px;background:#e9762b;"></div>
<svg class="a" style="left:355px;top:999px;" width="7" height="11" viewBox="0 0 7 11"><path d="M0.8 0.8L5.2 5.2L0.8 9.6" fill="none" stroke="#808080" stroke-width="1.1"/></svg>
<svg class="a" style="left:1039px;top:985px" width="10" height="6"><path d="M0.5 0.5L5 5.2L9.5 0.5" fill="none" stroke="#999" stroke-width="1"/></svg>
<div class="a" style="left:1054px;top:142px;width:310px;height:850px;background:#f9dbc3;"></div>
<div class="a" style="left:1054px;top:142px;width:1px;height:850px;background:#f4cfb2;"></div>
<div class="a t" style="left:1064.61px;top:161px;font-size:16px;color:#1c2029;font-weight:normal;font-family:'Liberation Sans',sans-serif;transform:scaleX(1.0276);-webkit-text-stroke:0.3px #1c2029;">Außergewöhnliche Belastungen mit</div>
<div class="a t" style="left:1064.63px;top:182px;font-size:16px;color:#1c2029;font-weight:normal;font-family:'Liberation Sans',sans-serif;transform:scaleX(1.0147);-webkit-text-stroke:0.3px #1c2029;">zumutbarer Belastung</div>
<div class="a t" style="left:1064.69px;top:212px;font-size:16px;color:#1c2029;font-weight:normal;font-family:'Liberation Sans',sans-serif;transform:scaleX(0.9467);">Sparen Sie los: Der Steuerschieber zeigt</div>
<div class="a t" style="left:1064.66px;top:233px;font-size:16px;color:#1c2029;font-weight:normal;font-family:'Liberation Sans',sans-serif;transform:scaleX(0.9794);">sofort, wie viel Ihnen eine Änderung</div>
<div class="a t" style="left:1064.67px;top:254px;font-size:16px;color:#1c2029;font-weight:normal;font-family:'Liberation Sans',sans-serif;transform:scaleX(0.9715);">bringt...</div>
<div class="a" style="left:1065px;top:288px;width:295px;height:72px;background:#fcebdf;"></div>
<div class="a" style="left:1100px;top:310px;width:150px;height:20px;background:#f0ae2e;"></div>
<div class="a" style="left:1250px;top:310px;width:75px;height:20px;background:#03904a;"></div>
<svg class="a" style="left:1066px;top:298px;" width="70" height="32" viewBox="0 0 70 32"><path d="M1.5 1.5H67.5V23.5H44L34.3 30.5L27 23.5H1.5Z" fill="#fff" stroke="#a0a0a0" stroke-width="1"/></svg>
<div class="a t" style="left:1087.70px;top:306px;font-size:12px;color:#1c2029;font-weight:normal;font-family:'Liberation Sans',sans-serif;transform:scaleX(1.1178);">+0 €</div>
<div class="a" style="left:1100px;top:332px;width:1px;height:6px;background:#666;"></div>
<div class="a" style="left:1249px;top:332px;width:1px;height:6px;background:#666;"></div>
<div class="a t" style="left:1089.11px;top:338px;font-size:15.5px;color:#1c2029;font-weight:normal;font-family:'Liberation Sans',sans-serif;transform:scaleX(1.0626);">0 €</div>
<div class="a t" style="left:1229.67px;top:338px;font-size:15.5px;color:#1c2029;font-weight:normal;font-family:'Liberation Sans',sans-serif;transform:scaleX(0.9996);">1.017 €</div>
<div class="a t" style="left:1064.97px;top:372px;font-size:16px;color:#1c2029;font-weight:normal;font-family:'Liberation Sans',sans-serif;transform:scaleX(0.9723);">Bisher in Ihrer Steuererklärung</div>
<div class="a t" style="left:1338.34px;top:372px;font-size:16px;color:#1c2029;font-weight:normal;font-family:'Liberation Sans',sans-serif;-webkit-text-stroke:0.3px #1c2029;">0 €</div>
<div class="a t" style="left:1064.96px;top:396px;font-size:16px;color:#1c2029;font-weight:normal;font-family:'Liberation Sans',sans-serif;transform:scaleX(0.9840);">Durch die Änderung</div>
<div class="a t" style="left:1338.34px;top:396px;font-size:16px;color:#1c2029;font-weight:normal;font-family:'Liberation Sans',sans-serif;-webkit-text-stroke:0.3px #1c2029;">0 €</div>
<div class="a t" style="left:1064.94px;top:425px;font-size:16px;color:#1c2029;font-weight:normal;font-family:'Liberation Sans',sans-serif;transform:scaleX(0.9991);-webkit-text-stroke:0.3px #1c2029;">Steuerersparnis</div>
<div class="a t" style="left:1338.34px;top:425px;font-size:16px;color:#2f8a30;font-weight:normal;font-family:'Liberation Sans',sans-serif;-webkit-text-stroke:0.3px #2f8a30;">0 €</div>
<div class="a" style="left:1284px;top:919px;width:22px;height:21px;background:#f2dccb;"></div>
<svg class="a" style="left:1291px;top:926px;" width="8" height="8" viewBox="0 0 8 8"><circle cx="4" cy="4" r="2.8" fill="#f2cdb0"/></svg>
<div class="a t" style="left:1316.31px;top:925px;font-size:11.5px;color:#efcfbc;font-weight:normal;font-family:'Liberation Sans',sans-serif;">Rechteck</div>
</body></html>
